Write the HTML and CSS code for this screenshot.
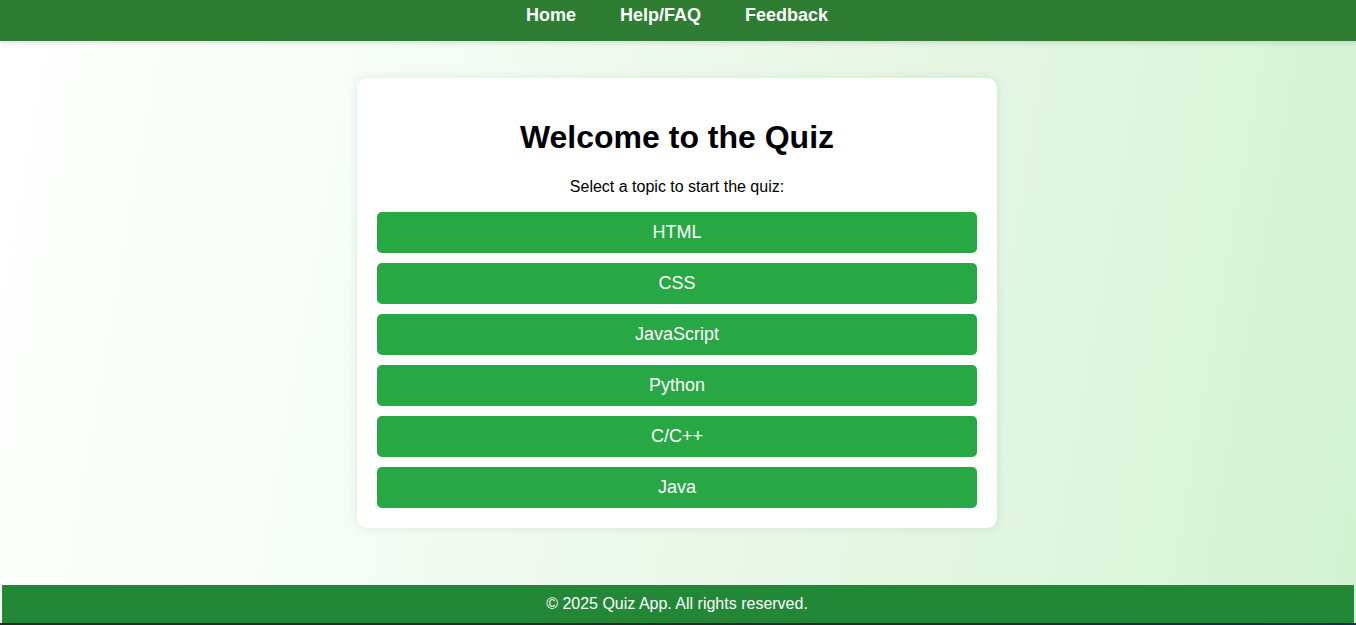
FILE: index.html
```html
<!DOCTYPE html>
<html lang="en">
<head>
<meta charset="utf-8">
<title>Quiz App</title>
<link rel="stylesheet" href="styles.css">
</head>
<body>
<header class="site-header">
  <nav class="nav">
    <a href="#" class="nav-link">Home</a>
    <a href="#" class="nav-link">Help/FAQ</a>
    <a href="#" class="nav-link">Feedback</a>
  </nav>
</header>
<main class="main">
  <section class="card">
    <h1 class="title">Welcome to the Quiz</h1>
    <p class="subtitle">Select a topic to start the quiz:</p>
    <div class="topics">
      <button class="topic">HTML</button>
      <button class="topic">CSS</button>
      <button class="topic">JavaScript</button>
      <button class="topic">Python</button>
      <button class="topic">C/C++</button>
      <button class="topic">Java</button>
    </div>
  </section>
</main>
<footer class="site-footer">© 2025 Quiz App. All rights reserved.</footer>
<div class="edge"></div>
</body>
</html>
```
FILE: styles.css
```css
html, body {
  margin: 0;
  padding: 0;
  height: 100%;
}
body {
  font-family: "Liberation Sans", Arial, sans-serif;
  background: linear-gradient(100deg, #ffffff 0%, #f3fbf3 35%, #e8f7e6 60%, #d3f3d3 100%);
  display: flex;
  flex-direction: column;
  min-height: 625px;
  height: 625px;
  overflow: hidden;
}
.site-header {
  background: #2e7d32;
  height: 41px;
  flex: none;
  box-shadow: 0 2px 5px rgba(0, 0, 0, 0.12);
  position: relative;
  z-index: 1;
}
.nav {
  display: flex;
  justify-content: center;
  gap: 44px;
  padding-top: 5px;
  padding-right: 2px;
}
.nav-link {
  color: #fff;
  text-decoration: none;
  font-weight: bold;
  font-size: 18px;
  line-height: 20px;
}
.main {
  flex: 1;
  display: flex;
  justify-content: center;
  align-items: flex-start;
  padding-top: 37px;
  padding-right: 2px;
}
.card {
  width: 600px;
  padding: 20px;
  background: #fff;
  border-radius: 10px;
  box-shadow: 0 0 10px rgba(0, 80, 0, 0.1);
  text-align: center;
}
.title {
  font-size: 32px;
  font-weight: bold;
  margin: 21px 0 22px;
  color: #000;
}
.subtitle {
  font-size: 16px;
  margin: 0 0 16px;
  color: #000;
}
.topics {
  display: flex;
  flex-direction: column;
  gap: 10px;
}
.topic {
  display: block;
  width: 100%;
  height: 41px;
  border: none;
  border-radius: 5px;
  background: #28a745;
  color: #fff;
  font-family: "Liberation Sans", Arial, sans-serif;
  font-size: 18px;
  padding: 0;
  cursor: pointer;
}
.site-footer {
  flex: none;
  height: 38px;
  margin: 0 2px;
  padding-right: 2px;
  background: #228838;
  color: #fff;
  font-size: 16px;
  display: flex;
  align-items: center;
  justify-content: center;
}
.edge {
  flex: none;
  height: 2px;
  background: linear-gradient(to right, #2a2a2a 0%, #2a2a2a 70%, #1c2a55 100%);
}
```
